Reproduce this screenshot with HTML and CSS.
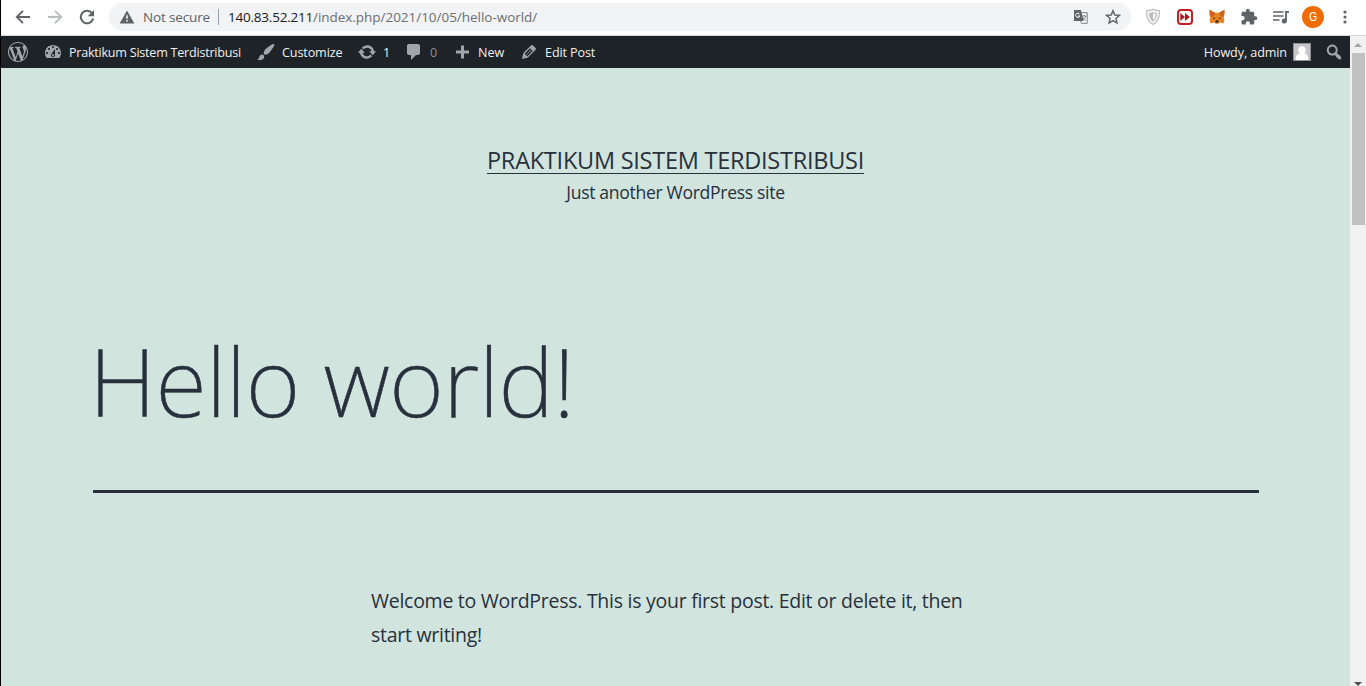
FILE: index.html
```html
<!DOCTYPE html>
<html lang="en-US">
<head>
<meta charset="utf-8">
<title>Hello world! – Praktikum Sistem Terdistribusi</title>
<link rel="stylesheet" href="styles.css">
</head>
<body>
<div class="window">
  <header class="toolbar">
    <nav class="nav-buttons">
      <span class="cell"><svg width="16" height="16" viewBox="0 0 16 16" fill="none" stroke="#5f6368" stroke-width="1.9"><path d="M15 8H2.2M8 1.8 1.8 8 8 14.2"/></svg></span>
      <span class="cell"><svg width="16" height="16" viewBox="0 0 16 16" fill="none" stroke="#babcbe" stroke-width="1.9"><path d="M1 8h12.8M8 1.8 14.2 8 8 14.2"/></svg></span>
      <span class="cell"><svg width="16" height="16" viewBox="0 0 16 16"><path d="M13.4 4.6A6.3 6.3 0 1 0 14.2 9.6" fill="none" stroke="#5f6368" stroke-width="2"/><path d="M15 1v6.3H8.7z" fill="#5f6368"/></svg></span>
    </nav>
    <div class="omnibox">
      <svg class="warn" width="16" height="14" viewBox="0 0 16 14"><path d="M8 .5 15.4 13.4H.6z" fill="#5f6368"/><path d="M7.2 5.2h1.6v3.6H7.2zM7.2 10h1.6v1.6H7.2z" fill="#f1f3f4"/></svg>
      <span class="security">Not secure</span>
      <span class="divider"></span>
      <span class="url"><b>140.83.52.211</b><span>/index.php/2021/10/05/hello-world/</span></span>
      <span class="omni-icons">
        <svg width="16" height="16" viewBox="0 0 16 16"><path d="M7 3.7h7.2v10.6H8.6L7 11" fill="#fff" stroke="#777b80" stroke-width="1"/><path d="M1 1h6.9l2.8 10.9H1z" fill="#5f6368"/><path d="M6.6 5.2A2.1 2.1 0 1 0 6.8 7H4.8" fill="none" stroke="#fff" stroke-width="1"/><path d="M9.2 7h4.3M11.3 5.9V7M12.7 7c-.4 1.9-1.3 3.1-2.4 4M10 8.2c.7 1.5 1.7 2.5 3 3.4" fill="none" stroke="#777b80" stroke-width=".9"/></svg>
        <svg width="16" height="16" viewBox="0 0 16 16"><path d="M8 1.7 9.8 6l4.7.4-3.6 3.1 1.1 4.6L8 11.6l-4 2.5 1.1-4.6L1.5 6.4 6.2 6z" fill="none" stroke="#5f6368" stroke-width="1.4"/></svg>
      </span>
    </div>
    <div class="extensions">
      <span class="cell"><svg width="16" height="18" viewBox="0 0 16 18"><path d="M8 1.2c2 1 4.200 1.500 6.500 1.500C14.700 8.500 13.500 13.500 8 16.600 2.500 13.500 1.300 8.500 1.500 2.700 3.800 2.700 6 2.200 8 1.200z" fill="#f4f4f4" stroke="#bcbcbc" stroke-width="1.100"/><path d="M8 4c1.200.6 2.500.9 3.900 1-.1 3.800-1 6.700-3.900 8.700C5.100 11.700 4.200 8.800 4.100 5 5.500 4.900 6.800 4.600 8 4z" fill="#bcbcbc"/><path d="M8 5.300c.8.400 1.600.6 2.500.7-.1 2.700-.7 4.600-2.500 6.100z" fill="#fff"/></svg></span>
      <span class="cell"><svg width="16" height="16" viewBox="0 0 16 16"><rect x="1" y="1" width="14" height="14" rx="3" fill="#fff" stroke="#c21f24" stroke-width="2"/><path d="M3.300 4 8 8l-4.700 4zM8 4l4.900 4L8 12z" fill="#b0181d"/></svg></span>
      <span class="cell"><svg width="16" height="16" viewBox="0 0 16 16"><path d="M.5.7 6 3.800h4L15.500.7l-.2 5-.8 2.500 1 3-1.200 3.200-3.300-.8-1.500 1.200H6.500L5 13.600l-3.300.8L.5 11.200l1-3L.7 5.700z" fill="#e8821e"/><path d="M.5.7 6 3.800 4.700 7 1.500 8.200.7 5.700zM15.500.7 10 3.800 11.300 7l3.200 1.200.8-2.500z" fill="#cf6420"/><path d="M4 8.200 6.700 9.500 4.700 10zM12 8.200 9.300 9.500l2 .5z" fill="#3b2b22"/><path d="m6.300 12 .6-.5h2.200l.6.500-.2 1.500h-3z" fill="#28221f"/><path d="m5 13.600 1.300-.3.300 1.500zM11 13.600l-1.300-.3-.3 1.500z" fill="#d5c3b2"/></svg></span>
      <span class="cell"><svg width="18" height="18" viewBox="0 0 24 24"><path d="M20.500 11H19V7c0-1.100-.9-2-2-2h-4V3.500a2.500 2.500 0 0 0-5 0V5H4c-1.100 0-2 .9-2 2v3.800h1.500a2.700 2.700 0 0 1 0 5.400H2V20c0 1.100.9 2 2 2h3.800v-1.500a2.700 2.700 0 0 1 5.400 0V22H17c1.100 0 2-.9 2-2v-4h1.500a2.500 2.500 0 0 0 0-5z" fill="#5f6368"/></svg></span>
      <span class="cell"><svg width="18" height="16" viewBox="0 0 18 16"><path d="M1 3h10.500M1 7h10.500M1 11h6.500" stroke="#5f6368" stroke-width="1.700" fill="none"/><path d="M14 12V2.800h3" stroke="#5f6368" stroke-width="1.800" fill="none"/><circle cx="12.300" cy="12" r="2.500" fill="#5f6368"/></svg></span>
      <span class="cell"><span class="profile">G</span></span>
      <span class="cell"><svg width="4" height="16" viewBox="0 0 4 16" fill="#5f6368"><circle cx="2" cy="3" r="1.600"/><circle cx="2" cy="8" r="1.600"/><circle cx="2" cy="13" r="1.600"/></svg></span>
    </div>
  </header>

  <div class="viewport">
    <div class="page">
      <div class="adminbar">
        <div class="ab-left">
          <span class="ab-item"><svg class="dash" viewBox="0 0 20 20"><path d="M20 10c0-5.510-4.490-10-10-10C4.480 0 0 4.490 0 10c0 5.520 4.480 10 10 10 5.510 0 10-4.480 10-10zM7.780 15.370L4.370 6.220c.55-.02 1.170-.08 1.170-.08.5-.06.44-1.130-.06-1.110 0 0-1.450.11-2.370.11-.18 0-.37 0-.58-.01C4.120 2.690 6.870 1.110 10 1.110c2.330 0 4.450.87 6.050 2.340-.68-.11-1.650.39-1.650 1.580 0 .74.45 1.360.9 2.100.35.61.55 1.360.55 2.460 0 1.490-1.400 5-1.400 5l-3.030-8.370c.54-.02.82-.17.82-.17.5-.05.44-1.250-.06-1.220 0 0-1.440.12-2.380.12-.87 0-2.330-.12-2.330-.12-.5-.03-.56 1.200-.06 1.220l.92.08 1.260 3.410zM17.410 10c.24-.64.74-1.870.43-4.250.7 1.290 1.050 2.710 1.050 4.250 0 3.290-1.730 6.240-4.400 7.780.97-2.590 1.940-5.200 2.920-7.780zM6.100 18.090C3.120 16.650 1.110 13.530 1.110 10c0-1.300.23-2.480.72-3.590C3.250 10.300 4.670 14.200 6.100 18.090zm4.030-6.630l2.580 6.980c-.86.29-1.760.45-2.710.45-.79 0-1.570-.11-2.290-.33.81-2.380 1.620-4.740 2.420-7.100z"/></svg></span>
          <span class="ab-item"><svg class="dash" viewBox="0 0 20 20"><path fill-rule="evenodd" d="M3.760 16h12.480c1.100-1.370 1.760-3.110 1.760-5 0-4.420-3.580-8-8-8s-8 3.580-8 8c0 1.890.66 3.630 1.760 5zM10 4c.55 0 1 .45 1 1s-.45 1-1 1-1-.45-1-1 .45-1 1-1zM6 6c.55 0 1 .45 1 1s-.45 1-1 1-1-.45-1-1 .45-1 1-1zm8 0c.55 0 1 .45 1 1s-.45 1-1 1-1-.45-1-1 .45-1 1-1zm-5.370 5.550L12 7v6c0 1.100-.9 2-2 2s-2-.9-2-2c0-.57.24-1.080.63-1.450zM4 10c.55 0 1 .45 1 1s-.45 1-1 1-1-.45-1-1 .45-1 1-1zm12 0c.55 0 1 .45 1 1s-.45 1-1 1-1-.45-1-1 .45-1 1-1zm-5 3c0-.55-.45-1-1-1s-1 .45-1 1 .45 1 1 1 1-.45 1-1z"/></svg><span class="ab-site">Praktikum Sistem Terdistribusi</span></span>
          <span class="ab-item"><svg class="dash" viewBox="0 0 20 20"><path d="M18.330 3.570s.27-.8-.31-1.360c-.53-.52-1.220-.24-1.220-.24-.61.3-5.760 3.470-7.670 5.570-.86.96-2.060 3.790-1.090 4.820.92.98 3.960-.17 4.790-1 2.060-2.060 5.210-7.170 5.500-7.790zM1.400 17.650c2.370-1.560 1.460-3.410 3.230-4.640.93-.65 2.220-.62 3.080.29.63.67.8 2.570-.16 3.460-1.570 1.450-4 1.550-6.150.89z"/></svg><span class="ab-customize">Customize</span></span>
          <span class="ab-item"><svg class="dash" viewBox="0 0 20 20"><path d="M10.200 3.280c3.530 0 6.430 2.610 6.920 6h2.080l-3.500 4-3.500-4h2.320c-.45-1.970-2.210-3.450-4.320-3.450-1.450 0-2.730.71-3.540 1.780L4.950 5.660C6.230 4.200 8.110 3.280 10.200 3.280zm-.4 13.440c-3.520 0-6.430-2.610-6.920-6H.8l3.500-4c1.170 1.330 2.330 2.670 3.500 4H5.480c.45 1.970 2.210 3.450 4.320 3.450 1.450 0 2.730-.71 3.540-1.780l1.710 1.950c-1.280 1.460-3.150 2.380-5.250 2.380z"/></svg><span>1</span></span>
          <span class="ab-item"><svg class="dash" viewBox="0 0 20 20"><path d="M5 2h9c1.100 0 2 .9 2 2v7c0 1.100-.9 2-2 2h-2l-5 5v-5H5c-1.100 0-2-.9-2-2V4c0-1.100.9-2 2-2z"/></svg><span class="ab-zero">0</span></span>
          <span class="ab-item"><svg class="dash" viewBox="0 0 20 20"><path d="M17 8.500v3h-5v5H9v-5H4v-3h5v-5h3v5h5z"/></svg><span>New</span></span>
          <span class="ab-item"><svg class="dash" viewBox="0 0 20 20"><path fill-rule="evenodd" d="M13.890 3.390l2.710 2.720c.46.46.42 1.240.03 1.640l-8.010 8.020-5.560 1.160 1.160-5.580s7.600-7.630 7.990-8.030c.39-.39 1.220-.39 1.680.07zm-2.730 2.790l-5.590 5.610 1.110 1.110 5.540-5.650zm-2.970 8.230l5.580-5.600-1.070-1.080-5.590 5.600z"/></svg><span class="ab-edit">Edit Post</span></span>
        </div>
        <div class="ab-right">
          <span class="howdy">Howdy, admin</span>
          <svg class="avatar" width="18" height="18" viewBox="0 0 18 18"><rect x=".5" y=".5" width="17" height="17" fill="#c6c6c8" stroke="#8c8f94"/><path d="M9 3.200c2.300 0 3.700 1.600 3.700 3.800 0 1.500-.6 2.900-1.500 3.600 2.400.6 4 2 4 4.400v2H2.800v-2c0-2.400 1.600-3.800 4-4.400-.9-.7-1.500-2.100-1.500-3.600 0-2.200 1.400-3.800 3.700-3.800z" fill="#fff"/></svg>
          <svg class="dash" viewBox="0 0 20 20"><path fill-rule="evenodd" d="M12.140 4.180c1.870 1.870 2.110 4.750.72 6.890.12.1.22.21.36.31.2.16.47.36.81.59.34.24.56.39.66.47.42.31.73.57.94.78.32.32.6.65.84 1 .25.35.44.69.59 1.040.14.35.21.68.18 1-.02.32-.14.59-.36.81s-.49.34-.81.36c-.31.02-.65-.04-.99-.19-.35-.14-.7-.34-1.040-.59-.35-.24-.68-.52-1-.84-.21-.21-.47-.52-.77-.93-.1-.13-.25-.35-.47-.66-.22-.32-.4-.57-.56-.78-.16-.2-.29-.35-.44-.5-2.070 1.090-4.690.76-6.440-.98-2.140-2.150-2.140-5.640 0-7.780 2.150-2.150 5.630-2.150 7.780 0zm-1.410 6.360c1.360-1.370 1.360-3.580 0-4.950-1.370-1.370-3.590-1.370-4.950 0-1.370 1.370-1.370 3.580 0 4.950 1.360 1.370 3.580 1.370 4.950 0z"/></svg>
        </div>
      </div>
      <div class="site-header">
        <p class="site-title"><a>PRAKTIKUM SISTEM TERDISTRIBUSI</a></p>
        <p class="site-description">Just another WordPress site</p>
      </div>
      <main class="post">
        <h1 class="entry-title">Hello world!</h1>
        <p class="entry-content">Welcome to WordPress. This is your first post. Edit or delete it, then<br>start writing!</p>
      </main>
    </div>
    <div class="scrollbar">
      <span class="arrow-up"></span>
      <span class="thumb"></span>
      <span class="arrow-down"></span>
    </div>
  </div>
</div>
</body>
</html>
```
FILE: styles.css
```css
* { box-sizing: border-box; }
body { margin: 0; font-family: "Open Sans", "Noto Sans", sans-serif; }
p, h1 { margin: 0; }
svg { display: block; flex: none; }

.window {
  display: flex;
  flex-direction: column;
  width: 1366px;
  height: 686px;
  overflow: hidden;
  border-left: 1px solid #000;
  background: #fff;
}

/* Browser toolbar */
.toolbar {
  display: flex;
  align-items: flex-start;
  height: 36px;
  flex: none;
  padding-left: 6px;
  border-bottom: 1px solid #d5d7da;
}
.nav-buttons, .extensions { display: flex; }
.cell {
  display: flex;
  align-items: center;
  justify-content: center;
  width: 32px;
  height: 34px;
}
.omnibox {
  display: flex;
  align-items: center;
  width: 1022px;
  height: 28px;
  margin: 3px 6px 0;
  padding: 0 10px;
  border-radius: 14px;
  background: #f1f3f4;
  font-size: 13.5px;
  line-height: 28px;
  color: #5f6368;
  white-space: nowrap;
}
.security { width: 75px; margin-left: 8px; letter-spacing: -.15px; }
.divider { width: 1px; height: 16px; margin-right: 9px; background: #9aa0a6; }
.url { flex: 1; letter-spacing: -.03px; color: #6b6f73; }
.url b { font-weight: 400; letter-spacing: -.22px; color: #202124; }
.omni-icons { display: flex; gap: 16px; }
.profile {
  width: 22px;
  height: 22px;
  border-radius: 50%;
  background: #ef6c00;
  color: #fff;
  font: 12px/22px Roboto, sans-serif;
  text-align: center;
}

.viewport { display: flex; flex: 1; min-height: 0; }
.page { width: 1349px; background: #d1e4dd; color: #28303d; }

/* WordPress admin bar */
.adminbar {
  display: flex;
  justify-content: space-between;
  height: 32px;
  padding: 0 6px 0 7px;
  background: #1d2327;
  color: #f0f0f1;
  font-size: 12.6px;
  line-height: 32px;
  white-space: nowrap;
}
.dash { width: 20px; height: 20px; fill: #a0a5aa; }
.ab-left { display: grid; grid-template-columns: 35px 213px 101px 47px 48px 67px 90px; }
.ab-item { display: flex; align-items: center; gap: 6px; }
.ab-item span, .howdy { padding-top: 2px; line-height: 30px; }
.ab-site { letter-spacing: -.25px; }
.ab-customize { letter-spacing: -.12px; }
.ab-edit { letter-spacing: -.12px; }
.ab-zero { color: #8a8f94; }
.ab-right { display: flex; align-items: center; }
.howdy { letter-spacing: -.1px; }
.avatar { margin: 0 13px 0 6px; }

/* Post */
.site-header { padding-top: 77px; text-align: center; line-height: 30px; }
.site-title { font-size: 23.5px; letter-spacing: -.25px; }
.site-title a { text-decoration: underline 1px; text-underline-offset: 4px; }
.site-description { margin-top: 2px; font-size: 17.6px; letter-spacing: -.33px; }
.post { padding-top: 123px; }
.entry-title {
  width: 1166px;
  height: 163px;
  margin-left: 92px;
  padding-top: 1px;
  border-bottom: 3px solid #28303d;
  font: 200 94px/100px "Noto Sans", sans-serif;
  letter-spacing: -.6px;
  text-indent: -4px;
  -webkit-text-stroke: .5px #28303d;
}
.entry-content {
  margin: 91px 0 0 370px;
  font-size: 19.5px;
  line-height: 34px;
  letter-spacing: -.27px;
}

/* Scrollbar */
.scrollbar {
  display: flex;
  flex-direction: column;
  align-items: center;
  width: 16px;
  padding-top: 7px;
  background: #f1f1f1;
}
.arrow-up { border: 4px solid transparent; border-top: 0; border-bottom-color: #a3a3a3; }
.thumb { width: 13px; height: 172px; margin-top: 6px; background: #c1c1c1; }
.arrow-down { margin-top: auto; border: 4px solid transparent; border-bottom: 0; border-top-color: #505050; }
```
